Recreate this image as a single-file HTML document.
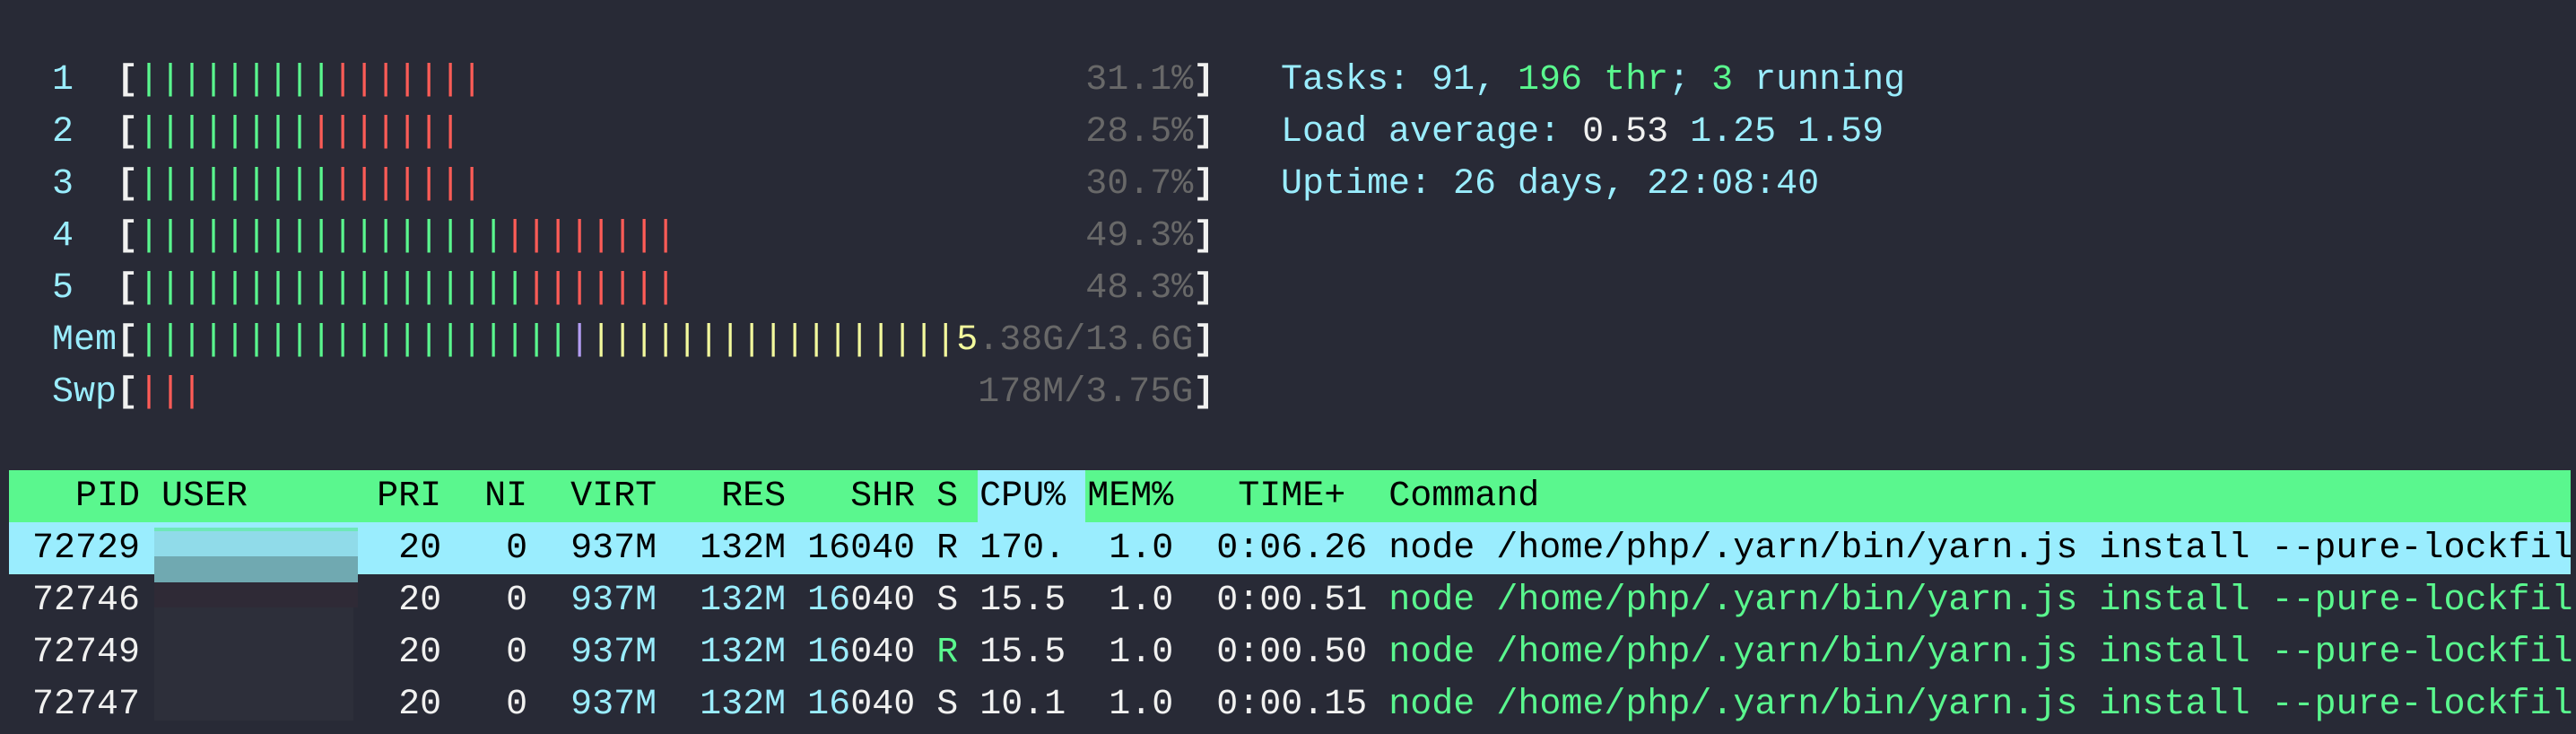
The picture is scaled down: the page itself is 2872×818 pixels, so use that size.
<!DOCTYPE html>
<html><head><meta charset="utf-8"><style>
html,body{margin:0;padding:0;background:#282a36;width:2872px;height:818px;overflow:hidden;position:relative}
.l{position:absolute;white-space:pre;font-family:"Liberation Mono",monospace;font-size:40px;line-height:58px;height:58px;color:#f1f1f0}
.c{color:#9aedfe}.g{color:#5af78e}.r{color:#ff5c57}.y{color:#f3f99d}.p{color:#b39df3}.d{color:#686868}.w{color:#f1f1f0;font-weight:bold}.k{color:#000}
.b{position:absolute}
</style></head><body>
<div class="l" style="left:58px;top:61px"><span class="c">1  </span><span class="w">[</span><span class="g">|||||||||</span><span class="r">|||||||</span>                            <span class="d">31.1%</span><span class="w">]</span></div>
<div class="l" style="left:58px;top:119px"><span class="c">2  </span><span class="w">[</span><span class="g">||||||||</span><span class="r">|||||||</span>                             <span class="d">28.5%</span><span class="w">]</span></div>
<div class="l" style="left:58px;top:177px"><span class="c">3  </span><span class="w">[</span><span class="g">|||||||||</span><span class="r">|||||||</span>                            <span class="d">30.7%</span><span class="w">]</span></div>
<div class="l" style="left:58px;top:235px"><span class="c">4  </span><span class="w">[</span><span class="g">|||||||||||||||||</span><span class="r">||||||||</span>                   <span class="d">49.3%</span><span class="w">]</span></div>
<div class="l" style="left:58px;top:293px"><span class="c">5  </span><span class="w">[</span><span class="g">||||||||||||||||||</span><span class="r">|||||||</span>                   <span class="d">48.3%</span><span class="w">]</span></div>
<div class="l" style="left:58px;top:351px"><span class="c">Mem</span><span class="w">[</span><span class="g">||||||||||||||||||||</span><span class="p">|</span><span class="y">|||||||||||||||||5</span><span class="d">.38G/13.6G</span><span class="w">]</span></div>
<div class="l" style="left:58px;top:409px"><span class="c">Swp</span><span class="w">[</span><span class="r">|||</span>                                    <span class="d">178M/3.75G</span><span class="w">]</span></div>

<div class="l c" style="left:1428px;top:61px">Tasks: 91, <span class="g">196</span> <span class="g">thr</span>; <span class="g">3</span> running</div>
<div class="l c" style="left:1428px;top:119px">Load average: <span style="color:#f1f1f0">0.53</span> 1.25 1.59</div>
<div class="l c" style="left:1428px;top:177px">Uptime: 26 days, 22:08:40</div>

<div class="b" style="left:10px;top:524px;width:2856px;height:58px;background:#5af78e"></div>
<div class="b" style="left:1090px;top:524px;width:120px;height:58px;background:#9aedfe"></div>
<div class="b" style="left:10px;top:582px;width:2856px;height:58px;background:#9aedfe"></div>
<div class="l k" style="left:36px;top:525px">  PID USER      PRI  NI  VIRT   RES   SHR S CPU% MEM%   TIME+  Command</div>
<div class="l k" style="left:36px;top:583px">72729            20   0  937M  132M 16040 R 170.  1.0  0:06.26 node /home/php/.yarn/bin/yarn.js install --pure-lockfil</div>
<div class="l" style="left:36px;top:641px">72746            20   0  <span class="c">937M</span>  <span class="c">132M</span> <span class="c">16</span>040 S 15.5  1.0  0:00.51 <span class="g">node /home/php/.yarn/bin/yarn.js install --pure-lockfil</span></div>
<div class="l" style="left:36px;top:699px">72749            20   0  <span class="c">937M</span>  <span class="c">132M</span> <span class="c">16</span>040 <span class="g">R</span> 15.5  1.0  0:00.50 <span class="g">node /home/php/.yarn/bin/yarn.js install --pure-lockfil</span></div>
<div class="l" style="left:36px;top:757px">72747            20   0  <span class="c">937M</span>  <span class="c">132M</span> <span class="c">16</span>040 S 10.1  1.0  0:00.15 <span class="g">node /home/php/.yarn/bin/yarn.js install --pure-lockfil</span></div>

<div class="b" style="left:172px;top:588px;width:227px;height:4px;background:#6ee8b8"></div>
<div class="b" style="left:172px;top:592px;width:227px;height:28px;background:#90dbe9"></div>
<div class="b" style="left:172px;top:620px;width:227px;height:29px;background:#70a9b1"></div>
<div class="b" style="left:172px;top:649px;width:227px;height:28px;background:#2f2a36"></div>
<div class="b" style="left:172px;top:677px;width:222px;height:126px;background:#2d2f3a"></div>
</body></html>
